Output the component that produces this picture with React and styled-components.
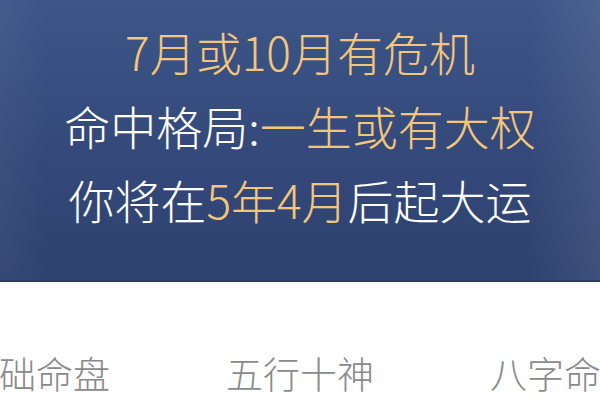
import React from "react"
import styled, { createGlobalStyle } from "styled-components"

const GlobalStyle = createGlobalStyle`
  html, body {
    margin: 0;
    padding: 0;
    background: #fff;
    overflow: hidden;
  }
  body {
    font-family: "Noto Sans CJK SC", "Noto Sans", sans-serif;
  }
`

const Page = styled.div`
  width: 600px;
  height: 400px;
  display: flex;
  flex-direction: column;
  overflow: hidden;
`

const Banner = styled.div`
  height: 282px;
  flex-shrink: 0;
  display: flex;
  flex-direction: column;
  align-items: center;
  padding-top: 14px;
  box-sizing: border-box;
  background:
    linear-gradient(90deg, rgba(255, 255, 255, 0.04) 0%, rgba(255, 255, 255, 0) 8%, rgba(255, 255, 255, 0) 88%, rgba(255, 255, 255, 0.08) 100%),
    linear-gradient(180deg, #3d5588 0%, #34497a 55%, #2e4270 100%);
  border-bottom: 2px solid #2a3b63;
`

const Line = styled.div`
  font-size: 46px;
  font-weight: 300;
  line-height: 74px;
  color: ${(p) => (p.$gold ? "#f3c67c" : "#ffffff")};
  white-space: nowrap;
`

const Gold = styled.span`
  color: #f3c67c;
`

const Tabs = styled.div`
  flex: 1;
  display: flex;
  justify-content: center;
  align-items: flex-start;
  gap: 116px;
  padding-top: 69px;
  background: #fff;
`

const Tab = styled.div`
  flex-shrink: 0;
  font-size: 37px;
  font-weight: 300;
  line-height: 44px;
  color: #8a8a8a;
  white-space: nowrap;
`

export default function App() {
  return (
    <Page>
      <GlobalStyle />
      <Banner>
        <Line $gold>7月或10月有危机</Line>
        <Line>
          命中格局:<Gold>一生或有大权</Gold>
        </Line>
        <Line>
          你将在<Gold>5年4月</Gold>后起大运
        </Line>
      </Banner>
      <Tabs>
        <Tab>基础命盘</Tab>
        <Tab>五行十神</Tab>
        <Tab>八字命理</Tab>
      </Tabs>
    </Page>
  )
}
